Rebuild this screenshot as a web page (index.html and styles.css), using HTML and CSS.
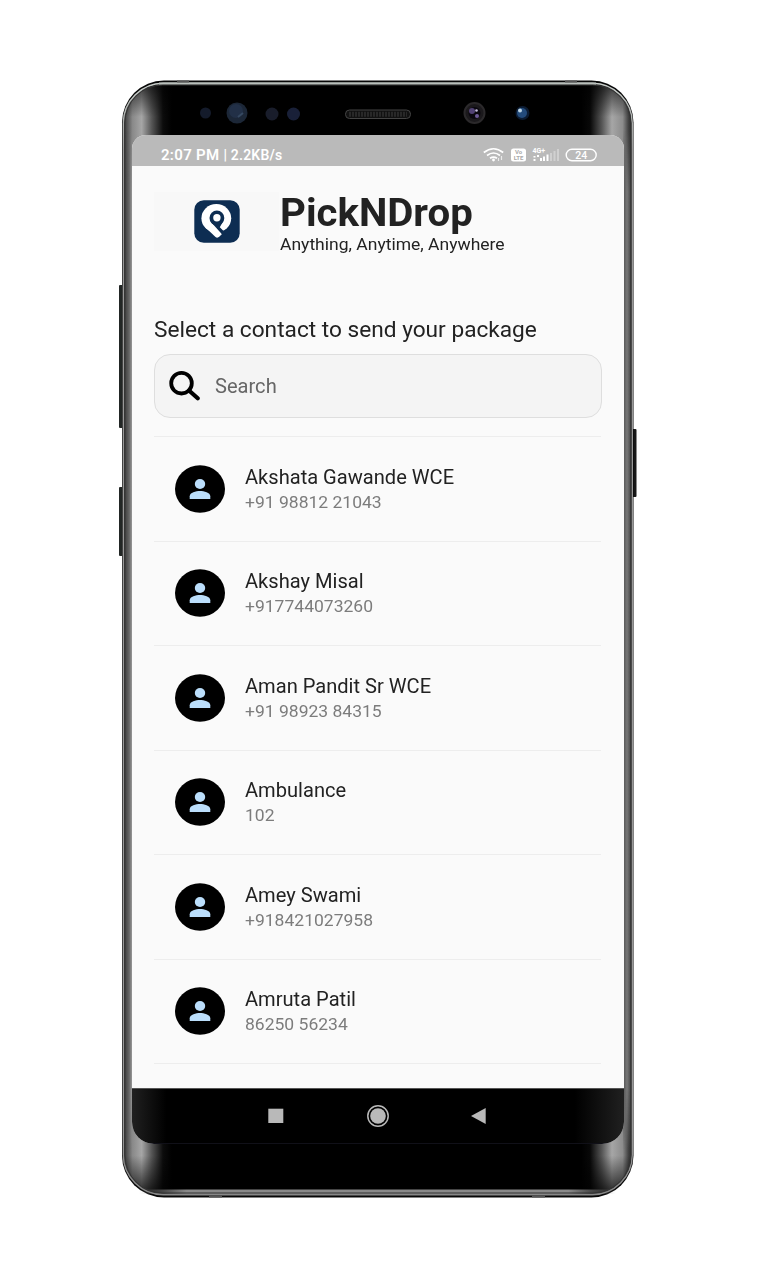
FILE: index.html
```html
<!DOCTYPE html>
<html lang="en">
<head>
<meta charset="utf-8">
<title>PickNDrop</title>
<link rel="stylesheet" href="styles.css">
</head>
<body>
<svg width="0" height="0" class="defs" aria-hidden="true">
  <symbol id="person" viewBox="0 0 50 48">
    <ellipse cx="25" cy="24" rx="25" ry="23.7" fill="#000"/>
    <ellipse cx="25" cy="19" rx="5.2" ry="4.9" fill="#bbdefb"/>
    <path d="M14.700 34V31.200C14.700 27.800 21 26.100 25 26.100S35.300 27.800 35.300 31.200V34Z" fill="#bbdefb"/>
  </symbol>
</svg>
<div class="phone">
  <svg class="shell" viewBox="0 0 517 1118" aria-hidden="true">
    <defs>
      <linearGradient id="edge" x1="0" x2="1">
        <stop offset="0" stop-color="#333"/><stop offset=".005" stop-color="#484848"/>
        <stop offset=".018" stop-color="#898989"/><stop offset=".036" stop-color="#a6a6a6"/>
        <stop offset=".056" stop-color="#555"/><stop offset=".078" stop-color="#0c0c0c"/><stop offset=".095" stop-color="#000"/>
        <stop offset=".9" stop-color="#000"/><stop offset=".917" stop-color="#080808"/>
        <stop offset=".94" stop-color="#555"/><stop offset=".96" stop-color="#a6a6a6"/>
        <stop offset=".981" stop-color="#8c8c8c"/><stop offset=".992" stop-color="#444"/><stop offset="1" stop-color="#222"/>
      </linearGradient>
      <linearGradient id="leftside" x1="0" x2="1"><stop offset="0" stop-color="#404040"/><stop offset=".6" stop-color="#666"/><stop offset="1" stop-color="#999"/></linearGradient>
      <linearGradient id="rightside" x1="0" x2="1"><stop offset="0" stop-color="#505050"/><stop offset=".5" stop-color="#777"/><stop offset="1" stop-color="#444"/></linearGradient>
      <linearGradient id="ends" x1="0" x2="0" y1="0" y2="1"><stop offset="0" stop-color="#000"/><stop offset=".06" stop-color="#fff"/><stop offset=".94" stop-color="#fff"/><stop offset="1" stop-color="#000"/></linearGradient>
      <mask id="sidemask" maskUnits="userSpaceOnUse" x="0" y="50" width="517" height="1020"><rect x="0" y="50" width="517" height="1020" fill="url(#ends)"/></mask>
      <linearGradient id="fade" x1="0" x2="0" y1="0" y2="1">
        <stop offset="0" stop-color="#000" stop-opacity=".7"/><stop offset=".03" stop-color="#000" stop-opacity="0"/>
        <stop offset=".965" stop-color="#000" stop-opacity="0"/><stop offset="1" stop-color="#000" stop-opacity=".8"/>
      </linearGradient>
      <linearGradient id="rim" x1="0" x2="0" y1="0" y2="1">
        <stop offset="0" stop-color="#c9cfcb"/><stop offset=".06" stop-color="#999"/><stop offset=".94" stop-color="#999"/><stop offset="1" stop-color="#888"/>
      </linearGradient>
      <linearGradient id="lip" x1="0" x2="1"><stop offset="0" stop-color="#8a8a8a" stop-opacity="0"/><stop offset=".1" stop-color="#8a8a8a"/><stop offset=".9" stop-color="#8a8a8a"/><stop offset="1" stop-color="#8a8a8a" stop-opacity="0"/></linearGradient>
    </defs>
    <rect x="0" y="205" width="4" height="143" rx="1" fill="#222625"/>
    <rect x="0" y="407" width="4" height="69" rx="1" fill="#222625"/>
    <rect x="513" y="349" width="4.5" height="68" rx="1" fill="#171717"/>
    <rect x="3" y=".5" width="511.5" height="1117" rx="42" fill="#080808"/>
    <rect x="4.3" y="3.5" width="509" height="1111" rx="40" fill="url(#edge)"/>
    <rect x="4.3" y="3.5" width="509" height="1111" rx="40" fill="url(#fade)"/>
    <g mask="url(#sidemask)">
      <path d="M6 50H13V1070H6Z" fill="url(#leftside)"/>
      <path d="M504 50H512V1070H504Z" fill="url(#rightside)"/>
    </g>
    <rect x="20" y="1109.500" width="477" height="4.500" fill="url(#lip)"/>
    <rect x="4.3" y="3.2" width="509" height="1111.6" rx="40" fill="none" stroke="url(#rim)" stroke-width="1.4"/>
    <rect x="5.8" y="5" width="506" height="1108" rx="38" fill="none" stroke="#333" stroke-width="1"/>
    <path d="M40 3.500H477" stroke="#b9bfbb" stroke-width="2"/>
    <path d="M58 1.500H70M446 1.500H458M90 1116.500H103M413 1116.500H426" stroke="#555" stroke-width="2"/>
    <circle cx="86.500" cy="33" r="5.500" fill="#141b2b"/>
    <circle cx="118" cy="33" r="10.500" fill="#1c2737"/>
    <circle cx="117" cy="31" r="7" fill="#223047"/><path d="M119 37L124 33" stroke="#364961" stroke-width="2"/>
    <circle cx="153" cy="34" r="6.500" fill="#191d2b"/><circle cx="174.500" cy="34" r="6.500" fill="#192038"/>
    <rect x="226.500" y="30" width="65" height="8.500" rx="4" fill="#111" stroke="#444"/>
    <path d="M230 34.300H288" stroke="#282828" stroke-width="5" stroke-dasharray="2 1"/>
    <circle cx="355.500" cy="33" r="10" fill="#1b191c" stroke="#2b292b" stroke-width="2"/>
    <circle cx="355.500" cy="33" r="6" fill="#09070e"/>
    <circle cx="353" cy="31" r="3" fill="#514274"/><circle cx="358" cy="36" r="2" fill="#6e5b98"/><circle cx="357.500" cy="30.500" r="1.300" fill="#c7c0dd"/>
    <circle cx="403.500" cy="33" r="7" fill="#0b1b32"/><circle cx="403" cy="33" r="5" fill="#234b7c"/>
    <circle cx="401" cy="30.500" r="2" fill="#bdd5e5"/>
  </svg>
  <main class="screen">
    <header class="status">
      <div class="clock"><b>2:07 PM</b><span>| 2.2KB/s</span></div>
      <svg class="signals" viewBox="0 0 114 16" aria-hidden="true">
        <g fill="none" stroke="#fff" stroke-width="1.700">
          <path d="M.8 5.500Q10.500-2 20.200 5.500M4 8.500Q10.500 3.500 17 8.500M7 11.300Q10.500 8.800 14 11.300"/>
          <path d="M15.500 14V11M18.500 9V13" stroke-width="1.200" opacity=".7"/>
        </g>
        <circle cx="10.500" cy="13" r="1.400" fill="#fff"/>
        <rect x="28" y="1.500" width="15" height="13" rx="2.500" fill="#fff"/>
        <text x="35.500" y="7.300" class="volte">Vo</text><text x="35.500" y="13.300" class="volte">LTE</text>
        <text x="49.500" y="6" class="gen">4G+</text>
        <path d="M51.500 9V10.500M51.500 12V14M55 8V10M58 11V14M61 9.500V14M64.500 7.500V14" stroke="#fff" stroke-width="2"/>
        <path d="M68 6V14M71.500 4V14M75 2V14" stroke="#d0d0d0" stroke-width="2"/>
        <rect x="83.200" y="2.300" width="30" height="11.400" rx="5.700" fill="none" stroke="#fff" stroke-width="1.400"/>
        <text x="98.200" y="11.700" class="charge">24</text>
      </svg>
    </header>
    <section class="content">
      <div class="brand">
        <div class="logo-panel">
          <svg viewBox="0 0 46 43" width="46" height="43" aria-label="PickNDrop logo">
            <rect x=".3" y=".3" width="45.400" height="42.400" rx="9.500" fill="#0d2d52"/>
            <ellipse cx="22.300" cy="18.200" rx="14.900" ry="14.200" fill="#fff"/>
            <path d="M11 27L21.500 37Q23.500 38.500 25.500 36.500L27.500 34.500V27L18 20Z" fill="#fff"/>
            <path d="M16.500 21.500L27.300 33.500L32 35L29.300 30.800L25.800 27.300L29 21.500Z" fill="#0d2d52"/>
            <circle cx="22.900" cy="18" r="7.400" fill="#0d2d52"/>
            <circle cx="22.900" cy="17.800" r="3.700" fill="#fff"/>
          </svg>
        </div>
        <div class="brand-text">
          <h1><span class="t">PickNDrop</span></h1>
          <p><span class="t">Anything, Anytime, Anywhere</span></p>
        </div>
      </div>
      <h2><span class="t">Select a contact to send your package</span></h2>
      <div class="search">
        <svg viewBox="0 0 32 30" width="32" height="30" aria-hidden="true"><circle cx="12.500" cy="12.200" r="10.300" fill="none" stroke="#000" stroke-width="3.800"/><path d="M20 19.500L28.700 27.300" stroke="#000" stroke-width="4.200" stroke-linecap="round"/></svg>
        <span class="t">Search</span>
      </div>
      <ul class="contacts">
        <li><svg class="avatar"><use href="#person"/></svg><div><b class="t">Akshata Gawande WCE</b><span class="t">+91 98812 21043</span></div></li>
        <li><svg class="avatar"><use href="#person"/></svg><div><b class="t">Akshay Misal</b><span class="t">+917744073260</span></div></li>
        <li><svg class="avatar"><use href="#person"/></svg><div><b class="t">Aman Pandit Sr WCE</b><span class="t">+91 98923 84315</span></div></li>
        <li><svg class="avatar"><use href="#person"/></svg><div><b class="t">Ambulance</b><span class="t">102</span></div></li>
        <li><svg class="avatar"><use href="#person"/></svg><div><b class="t">Amey Swami</b><span class="t">+918421027958</span></div></li>
        <li><svg class="avatar"><use href="#person"/></svg><div><b class="t">Amruta Patil</b><span class="t">86250 56234</span></div></li>
      </ul>
    </section>
    <nav class="navbar">
      <svg viewBox="0 0 492 56" aria-hidden="true">
        <rect x="136.300" y="20.700" width="15" height="14.300" fill="#b9b9b9"/>
        <circle cx="246" cy="28" r="10.200" fill="none" stroke="#b9b9b9" stroke-width="1.500"/><circle cx="246" cy="28" r="7.800" fill="#b9b9b9"/>
        <path d="M339 28L353.700 20V36Z" fill="#b9b9b9"/>
      </svg>
    </nav>
  </main>
</div>
</body>
</html>
```
FILE: styles.css
```css
* { box-sizing: border-box; }
body { margin: 0; background: #fff; font-family: Roboto, sans-serif; }
.defs { position: absolute; }
.phone { position: relative; width: 517px; height: 1118px; margin: 80px 0 0 119px; padding: 55px 12px 54px 13px; }
.shell { position: absolute; inset: 0; width: 517px; height: 1118px; overflow: visible; }
.screen { position: relative; width: 492px; height: 1009px; display: flex; flex-direction: column; overflow: hidden; border-radius: 14px 14px 22px 22px; background: #fafafa; }
.status { height: 31px; flex: none; background: #bababa; display: flex; align-items: center; justify-content: space-between; padding: 9px 27px 0 29px; color: #fff; }
.clock { display: flex; align-items: baseline; gap: 4px; font-size: 15px; line-height: 22px; letter-spacing: .3px; white-space: nowrap; }
.clock b { font-weight: 600; }
.clock span { font-size: 14px; font-weight: 600; letter-spacing: .2px; }
.signals { width: 114px; height: 16px; }
.volte { font: 700 6px Roboto, sans-serif; fill: #aaa; text-anchor: middle; }
.gen { font: 700 7px Roboto, sans-serif; fill: #fff; }
.charge { font: 500 10.5px Roboto, sans-serif; fill: #fff; text-anchor: middle; }
.content { height: 922px; padding: 26px 22px 0; color: #222; }
.t { display: inline-block; transform: scaleX(1.03); transform-origin: left; white-space: nowrap; }
.brand { display: flex; height: 64px; }
.logo-panel { width: 125px; height: 59px; display: flex; align-items: center; justify-content: center; background: #f8f8f8; }
.brand-text { padding-left: 1px; }
h1, h2, p { margin: 0; }
h1 { height: 41px; font-size: 39px; line-height: 42px; font-weight: 700; }
p { height: 22px; font-size: 17px; line-height: 22px; }
h2 { margin-top: 59px; height: 39px; font-size: 22px; line-height: 30px; font-weight: 400; }
.search { width: 448px; height: 64px; display: flex; align-items: center; gap: 14px; padding-left: 14px; border: 1px solid #dedede; border-radius: 16px; background: #f4f4f4; color: #666; font-size: 19.5px; }
.contacts { margin: 18px 0 0; padding: 0; list-style: none; border-top: 1px solid #ededed; width: 447px; }
.contacts li { height: 104.5px; display: flex; gap: 20.5px; padding-left: 20.5px; border-bottom: 1px solid #ededed; }
.avatar { width: 50px; height: 48px; flex: none; margin-top: 27.5px; }
.contacts div { display: flex; flex-direction: column; align-items: flex-start; padding-top: 27.5px; }
.contacts b { font-size: 19.5px; line-height: 26px; font-weight: 400; }
.contacts span { font-size: 17px; line-height: 23px; color: #7c7c7c; }
.navbar { height: 56px; flex: none; background: linear-gradient(90deg, #202020, #000 7%, #000 90%, #202020); border-top: 1px solid #555; border-bottom: 1px solid #101018; }
.navbar svg { display: block; width: 492px; height: 56px; margin-top: -1px; }
```
